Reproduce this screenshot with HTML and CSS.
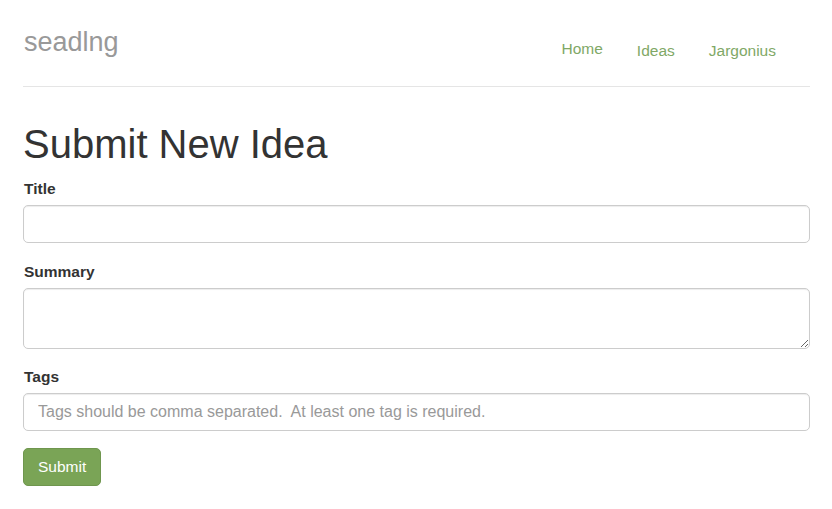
FILE: index.html
```html
<!DOCTYPE html>
<html lang="en">
<head>
<meta charset="utf-8">
<title>seadlng - Submit New Idea</title>
<link rel="stylesheet" href="styles.css">
</head>
<body>
<div class="container">
  <header class="header">
    <h3 class="brand">seadlng</h3>
    <nav class="nav">
      <a class="nav-link nav-link-first" href="#">Home</a>
      <a class="nav-link" href="#">Ideas</a>
      <a class="nav-link" href="#">Jargonius</a>
    </nav>
  </header>
  <main>
    <h1 class="page-title">Submit New Idea</h1>
    <form class="idea-form">
      <div class="form-group">
        <label class="form-label" for="title">Title</label>
        <input class="form-control" id="title" type="text">
      </div>
      <div class="form-group form-group-tight">
        <label class="form-label" for="summary">Summary</label>
        <textarea class="form-control form-textarea" id="summary"></textarea>
      </div>
      <div class="form-group">
        <label class="form-label" for="tags">Tags</label>
        <input class="form-control form-tags" id="tags" type="text" placeholder="Tags should be comma separated.  At least one tag is required.">
      </div>
      <button class="btn-submit" type="button">Submit</button>
    </form>
  </main>
</div>
</body>
</html>
```

FILE: styles.css
```css
* {
  box-sizing: border-box;
}

html, body {
  margin: 0;
  padding: 0;
  background: #fff;
}

body {
  font-family: "Liberation Sans", Arial, sans-serif;
  font-size: 15.5px;
  line-height: 22px;
  color: #333;
}

.container {
  padding: 0 22px 0 23px;
}

.header {
  display: flex;
  justify-content: space-between;
  align-items: flex-start;
  padding: 27px 0 24px;
  border-bottom: 1px solid #e5e5e5;
}

.brand {
  margin: 0 0 0 1px;
  font-size: 27px;
  line-height: 30px;
  font-weight: normal;
  color: #999;
}

.nav {
  display: flex;
  align-items: flex-start;
  margin-top: 13px;
  padding-right: 17px;
}

.nav-link {
  padding: 0 17px;
  color: #80a866;
  text-decoration: none;
  line-height: 22px;
}

.nav-link-first {
  margin-top: -2px;
}

.page-title {
  margin: 35px 0 0;
  font-size: 40px;
  line-height: 44px;
  font-weight: normal;
  color: #333;
}

.idea-form {
  margin-top: 12px;
}

.form-group {
  margin-bottom: 18px;
}

.form-group-tight {
  margin-bottom: 17px;
}

.form-label {
  display: block;
  margin-bottom: 5px;
  font-weight: bold;
  font-size: 15.5px;
  line-height: 22px;
  color: #333;
  padding-left: 1px;
}

.form-control {
  display: block;
  width: 100%;
  height: 38px;
  margin: 0;
  padding: 0 14px;
  font-family: "Liberation Sans", Arial, sans-serif;
  font-size: 15.5px;
  color: #555;
  background: #fff;
  border: 1px solid #ccc;
  border-radius: 5px;
  box-shadow: inset 0 1px 1px rgba(0, 0, 0, 0.075);
  outline: none;
}

.form-tags {
  font-size: 16px;
}

.form-control::placeholder {
  color: #999;
  opacity: 1;
}

.form-textarea {
  height: 61px;
  padding: 7px 14px;
  resize: vertical;
}

.btn-submit {
  display: block;
  height: 38px;
  padding: 0 14px;
  margin-top: -1px;
  font-family: "Liberation Sans", Arial, sans-serif;
  font-size: 15.5px;
  color: #fff;
  background: #7aa456;
  border: 1px solid #6f964e;
  border-radius: 5px;
  cursor: pointer;
}
```
